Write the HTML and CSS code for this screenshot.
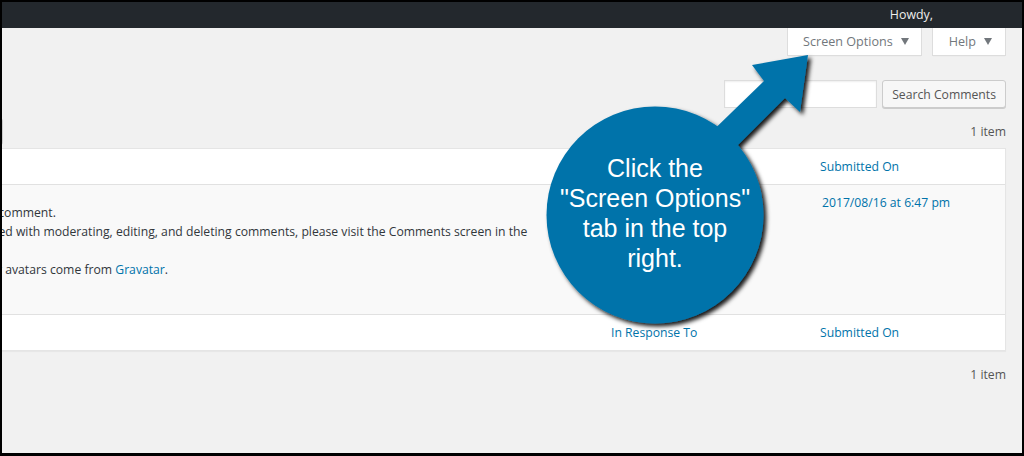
FILE: index.html
```html
<!DOCTYPE html>
<html lang="en">
<head>
    <meta charset="UTF-8">
    <title>Comments</title>
    <link rel="stylesheet" href="styles.css">
</head>
<body>
    <div class="screen">
        <div class="adminbar">
            <span class="howdy">Howdy,</span>
        </div>

        <div class="screen-meta-links">
            <button class="show-settings screen-options">Screen Options</button>
            <button class="show-settings help">Help</button>
        </div>

        <div class="wrap">
            <form class="search-box">
                <input type="search" class="search-input">
                <button type="button" class="button">Search Comments</button>
            </form>

            <div class="tablenav">
                <div class="bulkactions">
                    <select class="bulk-select"><option>Bulk Actions</option></select>
                    <button type="button" class="button small">Apply</button>
                </div>
                <span class="displaying-num">1 item</span>
            </div>

            <table class="comments">
                <colgroup>
                    <col class="w-author">
                    <col class="w-comment">
                    <col class="w-response">
                    <col>
                </colgroup>
                <thead>
                    <tr>
                        <th class="sortable"><a href="#">Author</a></th>
                        <th>Comment</th>
                        <th class="sortable"><a href="#">In Response To</a></th>
                        <th class="sortable"><a href="#">Submitted On</a></th>
                    </tr>
                </thead>
                <tbody>
                    <tr>
                        <td><strong>A WordPress Commenter</strong></td>
                        <td>
                            <p class="comment-text">Hi, this is a comment.<br>To get started with moderating, editing, and deleting comments, please visit the Comments screen in the dashboard.<br>Commenter avatars come from <a href="#">Gravatar</a>.</p>
                            <div class="row-actions">Unapprove | Reply | Quick Edit | Edit | Spam | Trash</div>
                        </td>
                        <td><a href="#">Hello world!</a></td>
                        <td><a href="#">2017/08/16 at 6:47 pm</a></td>
                    </tr>
                </tbody>
                <tfoot>
                    <tr>
                        <th class="sortable"><a href="#">Author</a></th>
                        <th>Comment</th>
                        <th class="sortable"><a href="#">In Response To</a></th>
                        <th class="sortable"><a href="#">Submitted On</a></th>
                    </tr>
                </tfoot>
            </table>

            <div class="tablenav bottom">
                <span class="displaying-num">1 item</span>
            </div>
        </div>

        <!-- Callout pointing at the Screen Options tab -->
        <svg class="callout" width="1024" height="456" viewBox="0 0 1024 456">
            <defs>
                <filter id="shadow" x="-20%" y="-20%" width="140%" height="140%">
                    <feDropShadow dx="3" dy="3" stdDeviation="2" flood-color="#000" flood-opacity="0.9"/>
                </filter>
            </defs>
            <g filter="url(#shadow)" fill="#0073aa">
                <polygon points="808,55 800,112 785,98 718,165 698,145 764,81 752,65"/>
                <circle cx="655" cy="215" r="108.5"/>
            </g>
        </svg>
        <div class="callout-text">Click the<br>"Screen Options"<br>tab in the top<br>right.</div>
    </div>
</body>
</html>
```

FILE: styles.css
```css
body {
    margin: 0;
    font-family: "Open Sans", sans-serif;
    font-size: 12.2px;
    color: #444;
}
a {
    color: #0073aa;
    text-decoration: none;
}
.screen {
    position: relative;
    width: 1024px;
    height: 456px;
    box-sizing: border-box;
    border: 2px solid #000;
    border-bottom-width: 3px;
    background-color: #f1f1f1;
    overflow: hidden;
}

/* Admin bar */
.adminbar {
    height: 26px;
    background-color: #23282d;
    display: flex;
    justify-content: flex-end;
    align-items: center;
    padding-right: 89px;
}
.howdy {
    color: #eee;
    font-size: 12.4px;
    line-height: 20px;
}

/* Screen Options / Help tabs */
.screen-meta-links {
    display: flex;
    justify-content: flex-end;
    gap: 10px;
    padding-right: 16px;
}
.show-settings {
    display: flex;
    align-items: center;
    height: 28px;
    box-sizing: border-box;
    padding: 0 12px 0 15px;
    background-color: #fff;
    border: 1px solid #ddd;
    border-top: 0;
    box-shadow: 0 1px 1px -1px rgba(0,0,0,0.1);
    color: #72777c;
    font-family: inherit;
    font-size: 12.6px;
}
.show-settings.help {
    padding: 0 13px 0 16px;
}
.show-settings::after {
    content: "";
    margin-left: 8px;
    border-left: 4px solid transparent;
    border-right: 4px solid transparent;
    border-top: 7px solid #72777c;
}

/* Content area (sidebar side cropped off) */
.wrap {
    margin: 24px 16px 0 -260px;
}
.search-box {
    display: flex;
    justify-content: flex-end;
    gap: 5px;
    margin: 0;
}
.search-input {
    width: 153px;
    height: 28px;
    box-sizing: border-box;
    margin: 0;
    border: 1px solid #ddd;
    box-shadow: inset 0 1px 2px rgba(0,0,0,0.07);
    background-color: #fff;
}
.button {
    height: 28px;
    box-sizing: border-box;
    margin: 0;
    padding: 0 9px;
    border: 1px solid #ccc;
    border-radius: 3px;
    background-color: #f7f7f7;
    box-shadow: 0 1px 0 #ccc;
    color: #555;
    font-family: inherit;
    font-size: 12.2px;
}
.button.small {
    height: 26px;
    width: 53px;
}

.tablenav {
    display: flex;
    justify-content: space-between;
    align-items: flex-start;
    height: 30px;
    margin: 6px 0 4px;
}
.tablenav.bottom {
    justify-content: flex-end;
}
.bulkactions {
    display: flex;
    gap: 6px;
    margin-top: 4px;
}
.bulk-select {
    width: 202px;
    height: 26px;
}
.displaying-num {
    padding-top: 8px;
    line-height: 19px;
    color: #555;
}

/* Comments table */
.comments {
    width: 100%;
    table-layout: fixed;
    border-spacing: 0;
    border: 1px solid #e5e5e5;
    box-shadow: 0 1px 1px rgba(0,0,0,0.04);
    background-color: #fff;
}
.w-author {
    width: 181px;
}
.w-comment {
    width: 679px;
}
.w-response {
    width: 209px;
}
.comments th {
    padding: 8px 10px;
    line-height: 19px;
    text-align: left;
    font-weight: normal;
    color: #32373c;
}
.comments th.sortable {
    padding: 0;
}
.comments th.sortable a {
    display: block;
    padding: 8px;
}
.comments thead th {
    border-bottom: 1px solid #e1e1e1;
}
.comments tfoot th {
    border-top: 1px solid #e1e1e1;
}
.comments td {
    padding: 8px 10px;
    line-height: 19px;
    vertical-align: top;
    background-color: #f9f9f9;
    color: #32373c;
}
.comment-text {
    margin: 10px 0 8px;
}
.row-actions {
    height: 19px;
    visibility: hidden;
}

/* Callout */
.callout {
    position: absolute;
    left: -2px;
    top: -2px;
}
.callout-text {
    position: absolute;
    left: 543px;
    top: 151px;
    width: 220px;
    color: #fff;
    font-family: "Liberation Sans", Arial, sans-serif;
    font-size: 25px;
    line-height: 30px;
    text-align: center;
}
```
